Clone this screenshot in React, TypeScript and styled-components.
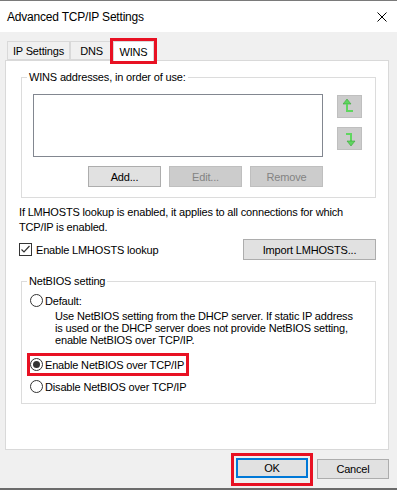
import React from 'react'
import styled, { createGlobalStyle } from 'styled-components'

const GlobalStyle = createGlobalStyle`
    body {
        margin: 0;
        font-family: 'Liberation Sans', Arial, sans-serif;
        font-size: 11px;
        letter-spacing: -0.17px;
        color: #000;
        background: #f0f0f0;
    }
`

const Window = styled.div`
    width: 397px;
    height: 490px;
    box-sizing: border-box;
    display: flex;
    flex-direction: column;
    background: #f0f0f0;
    border-top: 1px solid #7a7a7a;
    border-bottom: 2px solid #6b6b6b;
`

const TitleBar = styled.div`
    height: 31px;
    flex: none;
    display: flex;
    align-items: center;
    justify-content: space-between;
    padding: 0 10px 0 7px;
    background: #ffffff;
    font-size: 12px;
    letter-spacing: -0.2px;
`

const Content = styled.div`
    flex: 1;
    display: flex;
    flex-direction: column;
    padding: 0 8px 0 5px;
`

const TabStrip = styled.div`
    height: 28px;
    flex: none;
    display: flex;
    align-items: flex-end;
    padding-left: 2px;
`

const Tab = styled.div<{ $width: number; $active?: boolean }>`
    width: ${(p) => p.$width}px;
    height: ${(p) => (p.$active ? 20 : 19)}px;
    margin-bottom: ${(p) => (p.$active ? -1 : 0)}px;
    box-sizing: border-box;
    display: flex;
    align-items: center;
    justify-content: center;
    border: 1px solid #d9d9d9;
    border-bottom: ${(p) => (p.$active ? 'none' : '1px solid #d9d9d9')};
    background: ${(p) => (p.$active ? '#ffffff' : '#f0f0f0')};
    position: relative;
    z-index: ${(p) => (p.$active ? 2 : 1)};
    outline: ${(p) => (p.$active ? '3px solid #e81123' : 'none')};
`

const Panel = styled.div`
    height: 390px;
    flex: none;
    box-sizing: border-box;
    background: #ffffff;
    border: 1px solid #d9d9d9;
    padding: 10px 12px 0 13px;
    display: flex;
    flex-direction: column;
`

const Group = styled.fieldset<{ $top?: number }>`
    margin: ${(p) => p.$top ?? 0}px 0 0 2px;
    padding: 0;
    border: 1px solid #dcdcdc;
    min-width: 0;
`

const Legend = styled.legend`
    margin-left: 5px;
    padding: 0 2px;
    line-height: 13px;
`

const WinsBody = styled.div`
    display: grid;
    grid-template-columns: 290px 25px;
    column-gap: 14px;
    padding: 10px 13px 10px 11px;
`

const ListBox = styled.div`
    height: 63px;
    box-sizing: border-box;
    border: 1px solid #828790;
    background: #ffffff;
`

const ArrowColumn = styled.div`
    display: flex;
    flex-direction: column;
    gap: 9px;
    padding-top: 1px;
`

const ArrowButton = styled.div`
    width: 25px;
    height: 23px;
    box-sizing: border-box;
    display: flex;
    align-items: center;
    justify-content: center;
    background: #cccccc;
    border: 1px solid #bfbfbf;
`

const ButtonRow = styled.div`
    grid-column: 1;
    justify-self: end;
    display: flex;
    gap: 8px;
    margin-top: 9px;
`

const Button = styled.button<{ $width?: number; $height?: number; $focused?: boolean }>`
    width: ${(p) => p.$width ?? 73}px;
    height: ${(p) => p.$height ?? 21}px;
    box-sizing: border-box;
    padding: 0;
    font-family: inherit;
    font-size: 11px;
    letter-spacing: inherit;
    color: #000;
    background: #e1e1e1;
    border: ${(p) => (p.$focused ? '2px solid #0078d7' : '1px solid #adadad')};

    &:disabled {
        color: #838383;
        background: #cccccc;
        border-color: #bfbfbf;
    }
`

const Note = styled.p`
    margin: 7px 0 0;
    line-height: 15px;
`

const CheckRow = styled.div`
    margin-top: 4px;
    height: 21px;
    display: flex;
    align-items: center;
    justify-content: space-between;
`

const CheckLabel = styled.label`
    display: flex;
    align-items: center;
    gap: 4px;
`

const CheckBox = styled.span`
    width: 13px;
    height: 13px;
    box-sizing: border-box;
    border: 1px solid #333333;
    background: #ffffff;
    display: flex;
    align-items: center;
    justify-content: center;
`

const NetBody = styled.div`
    display: flex;
    flex-direction: column;
    align-items: flex-start;
    padding: 5px 0 9px 8px;
`

const RadioRow = styled.label<{ $top?: number; $marked?: boolean }>`
    margin-top: ${(p) => p.$top ?? 0}px;
    height: ${(p) => (p.$marked ? 17 : 15)}px;
    display: flex;
    align-items: center;
    gap: 2px;
    padding-right: ${(p) => (p.$marked ? 2 : 0)}px;
    outline: ${(p) => (p.$marked ? '3px solid #e81123' : 'none')};
`

const Radio = styled.span<{ $checked?: boolean }>`
    width: 13px;
    height: 13px;
    box-sizing: border-box;
    border: 1px solid #333333;
    border-radius: 50%;
    background: #ffffff;
    display: flex;
    align-items: center;
    justify-content: center;

    &::after {
        content: '';
        width: 7px;
        height: 7px;
        border-radius: 50%;
        background: ${(p) => (p.$checked ? '#333333' : 'transparent')};
    }
`

const Description = styled.p`
    margin: 2px 0 0 25px;
    line-height: 12px;
`

const Footer = styled.div`
    flex: 1;
    display: flex;
    justify-content: flex-end;
    align-items: flex-start;
    gap: 4px;
    padding-top: 3px;
`

const Highlight = styled.span`
    display: flex;
    padding: 2px 2px 5px 2px;
    border: 3px solid #e81123;
`

const CancelButton = styled(Button)`
    margin-top: 6px;
`

function UpArrow() {
    return (
        <svg width="12" height="15" viewBox="0 0 12 15" style={{ marginLeft: '-2px' }}>
            <path d="M4 0 L0 5 L8 5 Z" fill="#5fd65f" stroke="#3aa33a" strokeWidth="0.6" />
            <path d="M4 5 V12 H10" fill="none" stroke="#5fd65f" strokeWidth="2" />
        </svg>
    )
}

function DownArrow() {
    return (
        <svg width="12" height="15" viewBox="0 0 12 15">
            <path d="M2 3 H7 V10" fill="none" stroke="#5fd65f" strokeWidth="2" />
            <path d="M7 15 L3 10 L11 10 Z" fill="#5fd65f" stroke="#3aa33a" strokeWidth="0.6" />
        </svg>
    )
}

function App() {
    return (
        <Window>
            <GlobalStyle />
            <TitleBar>
                <span>Advanced TCP/IP Settings</span>
                <svg width="10" height="10" viewBox="0 0 10 10">
                    <path d="M0.5 0.5 L9.5 9.5 M9.5 0.5 L0.5 9.5" stroke="#000" strokeWidth="1" />
                </svg>
            </TitleBar>
            <Content>
                <TabStrip>
                    <Tab $width={63}>IP Settings</Tab>
                    <Tab $width={43}>DNS</Tab>
                    <Tab $width={41} $active>
                        WINS
                    </Tab>
                </TabStrip>
                <Panel>
                    <Group>
                        <Legend>WINS addresses, in order of use:</Legend>
                        <WinsBody>
                            <ListBox />
                            <ArrowColumn>
                                <ArrowButton>
                                    <UpArrow />
                                </ArrowButton>
                                <ArrowButton>
                                    <DownArrow />
                                </ArrowButton>
                            </ArrowColumn>
                            <ButtonRow>
                                <Button>Add...</Button>
                                <Button disabled>Edit...</Button>
                                <Button disabled>Remove</Button>
                            </ButtonRow>
                        </WinsBody>
                    </Group>
                    <Note>
                        If LMHOSTS lookup is enabled, it applies to all connections for which
                        <br />
                        TCP/IP is enabled.
                    </Note>
                    <CheckRow>
                        <CheckLabel>
                            <CheckBox>
                                <svg width="11" height="11" viewBox="0 0 11 11">
                                    <path d="M1.5 5.5 L4 8 L9.5 2" fill="none" stroke="#333" strokeWidth="1.2" />
                                </svg>
                            </CheckBox>
                            Enable LMHOSTS lookup
                        </CheckLabel>
                        <Button $width={133}>Import LMHOSTS...</Button>
                    </CheckRow>
                    <Group $top={15}>
                        <Legend>NetBIOS setting</Legend>
                        <NetBody>
                            <RadioRow>
                                <Radio />
                                Default:
                            </RadioRow>
                            <Description>
                                Use NetBIOS setting from the DHCP server. If static IP address
                                <br />
                                is used or the DHCP server does not provide NetBIOS setting,
                                <br />
                                enable NetBIOS over TCP/IP.
                            </Description>
                            <RadioRow $top={10} $marked>
                                <Radio $checked />
                                Enable NetBIOS over TCP/IP
                            </RadioRow>
                            <RadioRow $top={6}>
                                <Radio />
                                Disable NetBIOS over TCP/IP
                            </RadioRow>
                        </NetBody>
                    </Group>
                </Panel>
                <Footer>
                    <Highlight>
                        <Button $width={72} $height={20} $focused>
                            OK
                        </Button>
                    </Highlight>
                    <CancelButton $width={72} $height={20}>
                        Cancel
                    </CancelButton>
                </Footer>
            </Content>
        </Window>
    )
}

export default App
